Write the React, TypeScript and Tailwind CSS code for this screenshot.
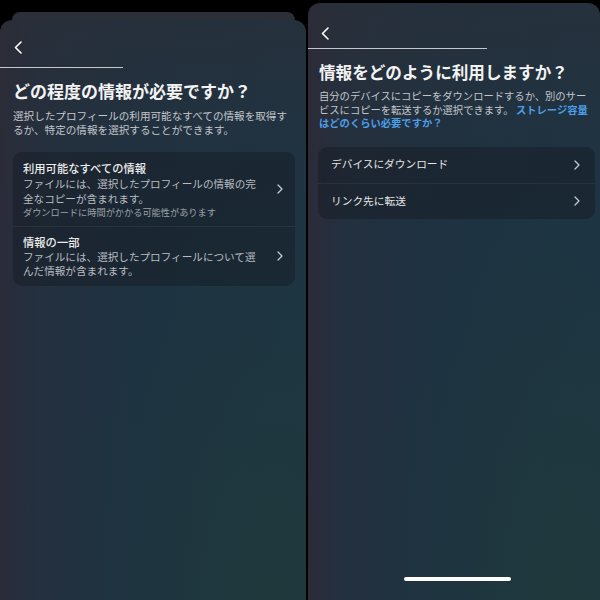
import React from 'react';

const jp = { fontFamily: '"Noto Sans CJK JP", "Noto Sans", sans-serif' };

function Chevron({ className = '' }: { className?: string }) {
  return (
    <svg viewBox="0 0 6 10" className={className} fill="none" stroke="currentColor" strokeWidth="1.3" strokeLinecap="round" strokeLinejoin="round">
      <path d="M1 1l4 4-4 4" />
    </svg>
  );
}

function Back() {
  return (
    <svg viewBox="0 0 8 13" className="w-[8px] h-[13px] text-white" fill="none" stroke="currentColor" strokeWidth="1.6" strokeLinecap="round" strokeLinejoin="round">
      <path d="M7 1L1.5 6.5 7 12" />
    </svg>
  );
}

const sheetBg =
  'bg-[radial-gradient(ellipse_at_90%_105%,rgba(32,62,52,0.5),transparent_55%),linear-gradient(180deg,rgba(44,46,54,0.55)_0%,transparent_35%),linear-gradient(90deg,#2b2b39_0%,#23303f_12%,#1e3242_45%,#1d3444_100%)]';

export default function App() {
  return (
    <div className="w-[600px] h-[600px] bg-black flex overflow-hidden" style={jp}>
      {/* left screen */}
      <div className="w-[306px] flex flex-col pt-3">
        <div className="h-2 ml-3 mr-[11px] rounded-t-[12px] bg-[#2b2f37]" />
        <div className={`flex-1 rounded-t-[12px] ${sheetBg} flex flex-col`}>
          <div className="pl-[14px] pt-[21px] h-[34px]">
            <Back />
          </div>
          <div className="mt-[13px] h-px w-[123px] bg-[#c4c7cc]" />
          <div className="px-[13px]">
            <h1 className="mt-[12px] text-[17px] leading-[22px] font-bold text-[#f3f3f3]">
              どの程度の情報が必要ですか？
            </h1>
            <p className="mt-[7px] text-[10.6px] leading-[14px] text-[#c3c7cc] whitespace-nowrap">
              選択したプロフィールの利用可能なすべての情報を取得す
              <br />
              るか、特定の情報を選択することができます。
            </p>
          </div>
          <div className="mt-[15px] ml-[13px] mr-[11px] rounded-[9px] bg-[rgba(22,28,36,0.5)]">
            <div className="flex items-center pl-[10px] pr-[12px] pt-[8px] pb-[8px]">
              <div className="flex-1 whitespace-nowrap">
                <div className="text-[11.3px] leading-[16px] font-medium text-[#ececec]">利用可能なすべての情報</div>
                <div className="text-[10.6px] leading-[15px] text-[#b9bdc2]">
                  ファイルには、選択したプロフィールの情報の完
                  <br />
                  全なコピーが含まれます。
                </div>
                <div className="text-[9.2px] leading-[12px] text-[#9da2a8]">ダウンロードに時間がかかる可能性があります</div>
              </div>
              <Chevron className="w-[6px] h-[10px] text-[#c6c9cd]" />
            </div>
            <div className="h-px bg-[rgba(255,255,255,0.06)]" />
            <div className="flex items-center pl-[10px] pr-[12px] pt-[7px] pb-[8px]">
              <div className="flex-1 whitespace-nowrap">
                <div className="text-[11.3px] leading-[16px] font-medium text-[#ececec]">情報の一部</div>
                <div className="text-[10.6px] leading-[14px] text-[#b9bdc2]">
                  ファイルには、選択したプロフィールについて選
                  <br />
                  んだ情報が含まれます。
                </div>
              </div>
              <Chevron className="w-[6px] h-[10px] text-[#c6c9cd]" />
            </div>
          </div>
        </div>
      </div>

      {/* right screen */}
      <div className="flex-1 flex flex-col pt-[3px] pl-[2px]">
        <div className={`flex-1 rounded-t-[12px] ${sheetBg} flex flex-col`}>
          <div className="pl-[13px] pt-[24px] h-[37px]">
            <Back />
          </div>
          <div className="mt-[8px] h-px w-[179px] bg-[#c4c7cc]" />
          <div className="pl-[11px] pr-[6px]">
            <h1 className="mt-[12px] text-[16.6px] leading-[22px] font-bold text-[#f3f3f3]">
              情報をどのように利用しますか？
            </h1>
            <p className="mt-[6px] text-[10.3px] leading-[13.5px] text-[#c3c7cc] whitespace-nowrap">
              自分のデバイスにコピーをダウンロードするか、別のサー
              <br />
              ビスにコピーを転送するか選択できます。
              <span className="font-bold text-[#4c9ee6]"> ストレージ容量</span>
              <br />
              <span className="font-bold text-[#4c9ee6]">はどのくらい必要ですか？</span>
            </p>
          </div>
          <div className="mt-[17px] ml-[10px] mr-[5px] rounded-[9px] bg-[rgba(22,28,36,0.5)]">
            <div className="flex items-center h-[36px] pl-[13px] pr-[15px]">
              <span className="flex-1 text-[10.7px] text-[#e6e6e6]">デバイスにダウンロード</span>
              <Chevron className="w-[6px] h-[10px] text-[#c6c9cd]" />
            </div>
            <div className="h-px bg-[rgba(255,255,255,0.05)]" />
            <div className="flex items-center h-[35px] pl-[13px] pr-[15px]">
              <span className="flex-1 text-[10.7px] text-[#e6e6e6]">リンク先に転送</span>
              <Chevron className="w-[6px] h-[10px] text-[#c6c9cd]" />
            </div>
          </div>
          <div className="mt-auto mb-[19px] ml-[96px] h-[4px] w-[107px] rounded-full bg-white" />
        </div>
      </div>
    </div>
  );
}
